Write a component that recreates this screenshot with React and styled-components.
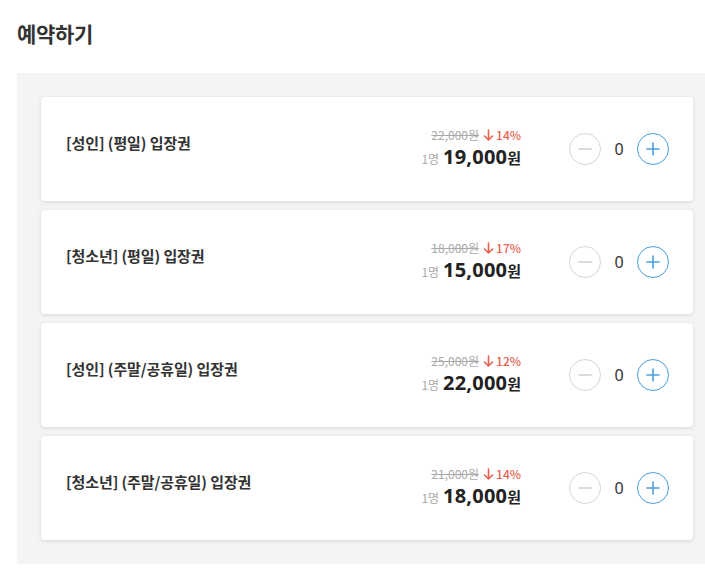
import React from "react";
import styled, { createGlobalStyle } from "styled-components";

const Global = createGlobalStyle`
  html, body { margin: 0; padding: 0; background: #fff; overflow: hidden; }
  body { font-family: "Noto Sans", "Noto Sans CJK KR", sans-serif; color: #333; }
`;

const Page = styled.div`
  padding: 18px 0 0 17px;
  width: 700px;
`;

const Heading = styled.h2`
  margin: 0 0 25px;
  font-family: "Noto Sans CJK KR", sans-serif;
  font-size: 21px;
  font-weight: 700;
  line-height: 30px;
  color: #333;
  letter-spacing: -0.3px;
`;

const Panel = styled.div`
  background: #f3f4f6;
  padding: 24px;
  display: flex;
  flex-direction: column;
  gap: 9px;
`;

const Card = styled.div`
  background: #fff;
  border-radius: 4px;
  box-shadow: 0 1px 4px rgba(0, 0, 0, 0.12);
  height: 104px;
  box-sizing: border-box;
  padding: 0 24px 0 25px;
  display: flex;
  align-items: center;
`;

const Title = styled.div`
  flex: 1;
  font-family: "Noto Sans CJK KR", sans-serif;
  font-size: 15px;
  font-weight: 700;
  color: #333;
  margin-top: -13px;
  letter-spacing: -0.1px;
`;

const Price = styled.div`
  display: flex;
  flex-direction: column;
  align-items: flex-end;
  margin-right: 48px;
  margin-top: 0;
`;

const Discount = styled.div`
  display: flex;
  align-items: center;
  gap: 4px;
  font-size: 12px;
  line-height: 18px;
  font-family: "Noto Sans CJK KR", sans-serif;
`;

const Original = styled.span`
  color: #aaa;
  text-decoration: line-through;
`;

const Rate = styled.span`
  color: #e8604c;
  font-weight: 500;
  display: flex;
  align-items: center;
  gap: 2px;
`;

const Current = styled.div`
  display: flex;
  align-items: baseline;
  line-height: 26px;
  font-family: "Noto Sans CJK KR", sans-serif;
`;

const Unit = styled.span`
  color: #aaa;
  font-size: 12px;
  margin-right: 4px;
`;

const Amount = styled.span`
  font-family: "Noto Sans", sans-serif;
  font-size: 20px;
  font-weight: 700;
  color: #222;
  letter-spacing: 0.2px;
`;

const Won = styled.span`
  font-size: 15px;
  font-weight: 700;
  color: #222;
`;

const Counter = styled.div`
  display: flex;
  align-items: center;
`;

const RoundButton = styled.button`
  width: 32px;
  height: 32px;
  border-radius: 50%;
  border: 1px solid ${(p) => (p.$active ? "#4a9fe0" : "#d6d6d6")};
  background: #fff;
  padding: 0;
  display: flex;
  align-items: center;
  justify-content: center;
  color: ${(p) => (p.$active ? "#4a9fe0" : "#d0d0d0")};
`;

const Count = styled.span`
  width: 36px;
  text-align: center;
  font-size: 16px;
  color: #333;
  margin-top: -1px;
`;

const Minus = () => (
  <svg width="14" height="14" viewBox="0 0 14 14">
    <path d="M1 7h12" stroke="currentColor" strokeWidth="1.6" strokeLinecap="round" />
  </svg>
);
const Plus = () => (
  <svg width="14" height="14" viewBox="0 0 14 14">
    <path d="M1 7h12M7 1v12" stroke="currentColor" strokeWidth="1.6" strokeLinecap="round" />
  </svg>
);
const Arrow = () => (
  <svg width="11" height="12" viewBox="0 0 11 12">
    <path d="M5.5 1v10M1.5 7l4 4 4-4" stroke="currentColor" strokeWidth="1.6" fill="none" strokeLinecap="round" strokeLinejoin="round" />
  </svg>
);

const items = [
  { title: "[성인] (평일) 입장권", orig: "22,000원", rate: "14%", price: "19,000" },
  { title: "[청소년] (평일) 입장권", orig: "18,000원", rate: "17%", price: "15,000" },
  { title: "[성인] (주말/공휴일) 입장권", orig: "25,000원", rate: "12%", price: "22,000" },
  { title: "[청소년] (주말/공휴일) 입장권", orig: "21,000원", rate: "14%", price: "18,000" },
];

export default function App() {
  return (
    <>
      <Global />
      <Page>
        <Heading>예약하기</Heading>
        <Panel>
          {items.map((it) => (
            <Card key={it.title}>
              <Title>{it.title}</Title>
              <Price>
                <Discount>
                  <Original>{it.orig}</Original>
                  <Rate>
                    <Arrow />
                    {it.rate}
                  </Rate>
                </Discount>
                <Current>
                  <Unit>1명</Unit>
                  <Amount>{it.price}</Amount>
                  <Won>원</Won>
                </Current>
              </Price>
              <Counter>
                <RoundButton>
                  <Minus />
                </RoundButton>
                <Count>0</Count>
                <RoundButton $active>
                  <Plus />
                </RoundButton>
              </Counter>
            </Card>
          ))}
        </Panel>
      </Page>
    </>
  );
}
